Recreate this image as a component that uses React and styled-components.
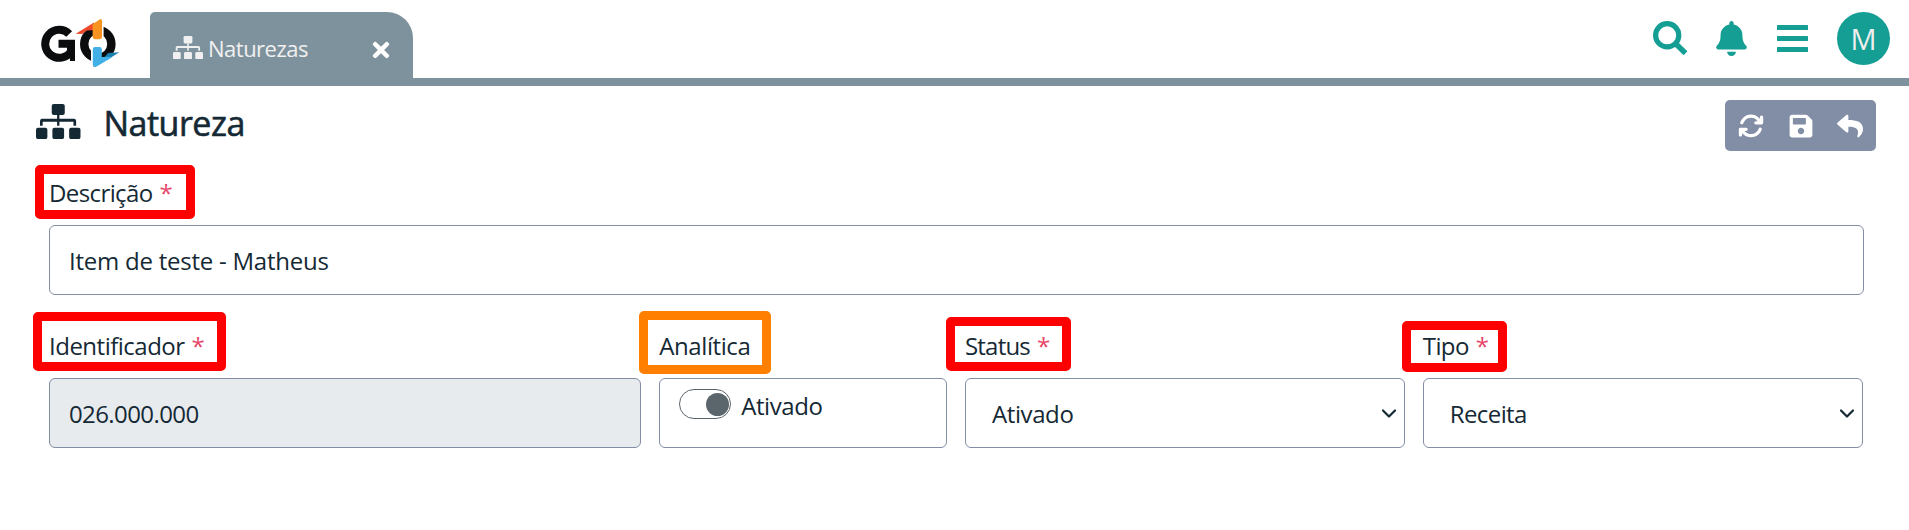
import React from "react";
import styled, { createGlobalStyle } from "styled-components";
import { FaTimes, FaBell, FaSave, FaReply } from "react-icons/fa";
import { FaArrowsRotate } from "react-icons/fa6";

const GlobalStyle = createGlobalStyle`
  *, *::before, *::after { box-sizing: border-box; }
  body {
    margin: 0;
    background: #fff;
    color: #152935;
    font-family: "Open Sans", "Noto Sans", sans-serif;
    font-size: 24px;
    line-height: 36px;
  }
`;

const T = styled.span`
  font-size: ${(p) => p.$size || 24}px;
  letter-spacing: ${(p) => p.$track ?? -0.6}px;
  white-space: nowrap;
`;

const Header = styled.header`
  display: flex;
  height: 86px;
  padding: 12px 19px 0 41px;
  border-bottom: 8px solid #7e929d;
`;

const Logo = styled.svg`
  width: 79px;
  height: 50px;
  margin-top: 6px;
  flex: none;
`;

const Tab = styled.div`
  display: flex;
  align-items: center;
  width: 263px;
  height: 66px;
  margin-left: 30px;
  padding: 5px 20px 0 23px;
  background: #7e929d;
  border-radius: 5px 26px 0 0;
  color: #f0f0f0;
  svg { flex: none; }
`;

const TabLabel = styled(T)`
  flex: 1;
  margin-left: 5px;
`;

const CloseIcon = styled(FaTimes)`
  margin-top: 5px;
  color: #fff;
`;

const HeaderActions = styled.nav`
  display: flex;
  margin-left: auto;
  color: #149e94;
  svg { display: block; }
`;

const HeaderIcon = styled.span`
  margin: 9px ${(p) => p.$gap}px 0 0;
`;

const Avatar = styled.div`
  display: flex;
  align-items: center;
  justify-content: center;
  width: 53px;
  height: 53px;
  border-radius: 50%;
  background: #149e94;
  color: #eee;
`;

const TitleBar = styled.div`
  display: flex;
  height: 78px;
  padding: 14px 33px 0 36px;
`;

const TitleIcon = styled.span`
  padding-top: 4px;
  svg { display: block; }
`;

const Title = styled.h1`
  margin: 0 auto 0 23px;
  font-size: 34px;
  font-weight: 400;
  line-height: 46px;
  letter-spacing: -0.5px;
  -webkit-text-stroke: 0.6px currentColor;
`;

const Toolbar = styled.div`
  display: flex;
  align-items: center;
  justify-content: space-between;
  width: 151px;
  height: 51px;
  padding: 0 13px;
  border-radius: 5px;
  background: #828ea5;
  color: #fff;
`;

const Form = styled.form`
  padding: 0 45px 0 49px;
`;

const Row = styled.div`
  display: grid;
  grid-template-columns: ${(p) => p.$cols};
  column-gap: 17.8px;
  margin-top: ${(p) => p.$mt || 0}px;
`;

const Field = styled.div`
  min-width: 0;
`;

const LabelLine = styled.div`
  height: ${(p) => p.$h}px;
  padding-top: ${(p) => p.$pt}px;
`;

const Label = styled.label`
  position: relative;
  display: inline-block;
  white-space: nowrap;
`;

const Required = styled(T)`
  margin-left: 7px;
  color: #e8476a;
`;

const Highlight = styled.span`
  position: absolute;
  left: ${(p) => p.$x}px;
  top: ${(p) => p.$y}px;
  width: ${(p) => p.$w}px;
  height: ${(p) => p.$h}px;
  border: 9px solid ${(p) => p.$color || "#ff0000"};
  border-radius: 5px;
`;

const Control = styled.div`
  display: flex;
  align-items: center;
  justify-content: space-between;
  height: 70px;
  padding: 2px ${(p) => (p.$select ? "7px 0 26px" : "19px 0 19px")};
  border: 1px solid #828ea5;
  border-radius: 6px;
  background: ${(p) => (p.$disabled ? "#e8ebee" : "#fff")};
`;

const SwitchControl = styled(Control)`
  align-items: flex-start;
  justify-content: flex-start;
  gap: 10px;
  padding-top: 10px;
`;

const SwitchText = styled(T)`
  margin-top: -1px;
`;

const Switch = styled.span`
  display: flex;
  justify-content: flex-end;
  align-items: center;
  width: 52px;
  height: 30px;
  padding: 1px;
  border: 1px solid #5b666c;
  border-radius: 15px;
  &::after {
    content: "";
    width: 23px;
    height: 23px;
    border-radius: 50%;
    background: #5b666c;
  }
`;

const Chevron = () => (
  <svg width="16" height="12" viewBox="0 0 16 12" fill="none" stroke="#152935" strokeWidth="2.2" strokeLinecap="round" strokeLinejoin="round">
    <path d="M2 2.5l6 6 6-6" />
  </svg>
);

const Sitemap = ({ width }) => (
  <svg width={width} height={(width * 105) / 133} viewBox="0 0 133 105" fill="currentColor">
    <rect x="47" y="0" width="39" height="33" rx="6" />
    <path d="M63 32h7v12h43q7 0 7 7v14h-8V53H70v12h-7V53H20v12h-8V51q0-7 7-7h44z" />
    <rect x="0" y="71" width="34" height="34" rx="6" />
    <rect x="49" y="71" width="35" height="34" rx="6" />
    <rect x="99" y="71" width="34" height="34" rx="6" />
  </svg>
);

const Search = () => (
  <svg width="35" height="35" viewBox="0 0 35 35" fill="none" stroke="currentColor">
    <circle cx="14.2" cy="14.3" r="11.6" strokeWidth="5.2" />
    <path d="M22.5 22.5L32.5 32.3" strokeWidth="5.4" strokeLinejoin="round" />
  </svg>
);

const Bars = () => (
  <svg width="31" height="35" viewBox="0 0 31 35" fill="currentColor">
    <rect y="4" width="31" height="5" rx="0.6" />
    <rect y="15" width="31" height="5" rx="0.6" />
    <rect y="26" width="31" height="5" rx="0.6" />
  </svg>
);

function Labelled({ text, track, required, mark, h = 51, pt = 1 }) {
  return (
    <LabelLine $h={h} $pt={pt}>
      <Label>
        <T $track={track}>{text}</T>
        {required && <Required>*</Required>}
        <Highlight $x={mark[0]} $y={mark[1]} $w={mark[2]} $h={mark[3]} $color={mark[4]} />
      </Label>
    </LabelLine>
  );
}

export default function App() {
  return (
    <>
      <GlobalStyle />
      <Header>
        <Logo viewBox="0 0 79 50">
          <path d="M28.2 16A14 14 0 1 0 30 33.4V25.7H17.5" fill="none" stroke="#0b0c0d" strokeWidth="8" />
          <path d="M28 30h6v13h-5z" fill="#0b0c0d" />
          <ellipse cx="56.8" cy="26" rx="13.6" ry="13.9" fill="none" stroke="#0b0c0d" strokeWidth="8.4" />
          <path d="M58 5h4.6v14H58zM50 30h4v17h-4z" fill="#fff" />
          <path d="M34.7 15.8L53 4.5V12L46 12.5 41 16z" fill="#ee4a2c" />
          <path d="M51.6 6.2L58.6 1.4q2.4-1 2.4 1.6v15.8q0 2.4-2.4 2.4h-4.6q-2.4 0-2.4-2.4z" fill="#f79421" />
          <path d="M78.3 34.3L66 42l-4-1 5-6z" fill="#1b7fae" />
          <path d="M51.8 31.4q0-2.4 2.4-2.4h4.2q2.4 0 2.4 2.4V39l8.2-.2 1.8.6-15.6 9.4q-3.4 1-3.4-2z" fill="#40b0e6" />
        </Logo>
        <Tab>
          <Sitemap width={30} />
          <TabLabel $size={22} $track={-0.5}>Naturezas</TabLabel>
          <CloseIcon size={24} />
        </Tab>
        <HeaderActions>
          <HeaderIcon $gap={26}><Search /></HeaderIcon>
          <HeaderIcon $gap={28}><FaBell size={35} /></HeaderIcon>
          <HeaderIcon $gap={29}><Bars /></HeaderIcon>
          <Avatar><T $size={29} $track={0}>M</T></Avatar>
        </HeaderActions>
      </Header>
      <TitleBar>
        <TitleIcon><Sitemap width={44.5} /></TitleIcon>
        <Title>Natureza</Title>
        <Toolbar>
          <FaArrowsRotate size={26} />
          <FaSave size={26} />
          <FaReply size={26} />
        </Toolbar>
      </TitleBar>
      <Form>
        <Row $cols="1fr">
          <Field>
            <Labelled text="Descrição" required mark={[-14, -10, 160, 54]} h={61} pt={11} />
            <Control><T $track={-0.24}>Item de teste - Matheus</T></Control>
          </Field>
        </Row>
        <Row $cols="592.4px 288px 440px 440px" $mt={32}>
          <Field>
            <Labelled text="Identificador" track={-0.5} required mark={[-16, -16, 193, 59]} />
            <Control $disabled><T>026.000.000</T></Control>
          </Field>
          <Field>
            <Labelled text="Analítica" track={-0.4} mark={[-20, -17, 132, 63, "#ff8000"]} />
            <SwitchControl><Switch /><SwitchText $track={-0.4}>Ativado</SwitchText></SwitchControl>
          </Field>
          <Field>
            <Labelled text="Status" track={-0.8} required mark={[-19, -11, 125, 54]} />
            <Control $select><T $track={-0.4}>Ativado</T><Chevron /></Control>
          </Field>
          <Field>
            <Labelled text="Tipo" required mark={[-21, -7, 105, 51]} />
            <Control $select><T>Receita</T><Chevron /></Control>
          </Field>
        </Row>
      </Form>
    </>
  );
}
